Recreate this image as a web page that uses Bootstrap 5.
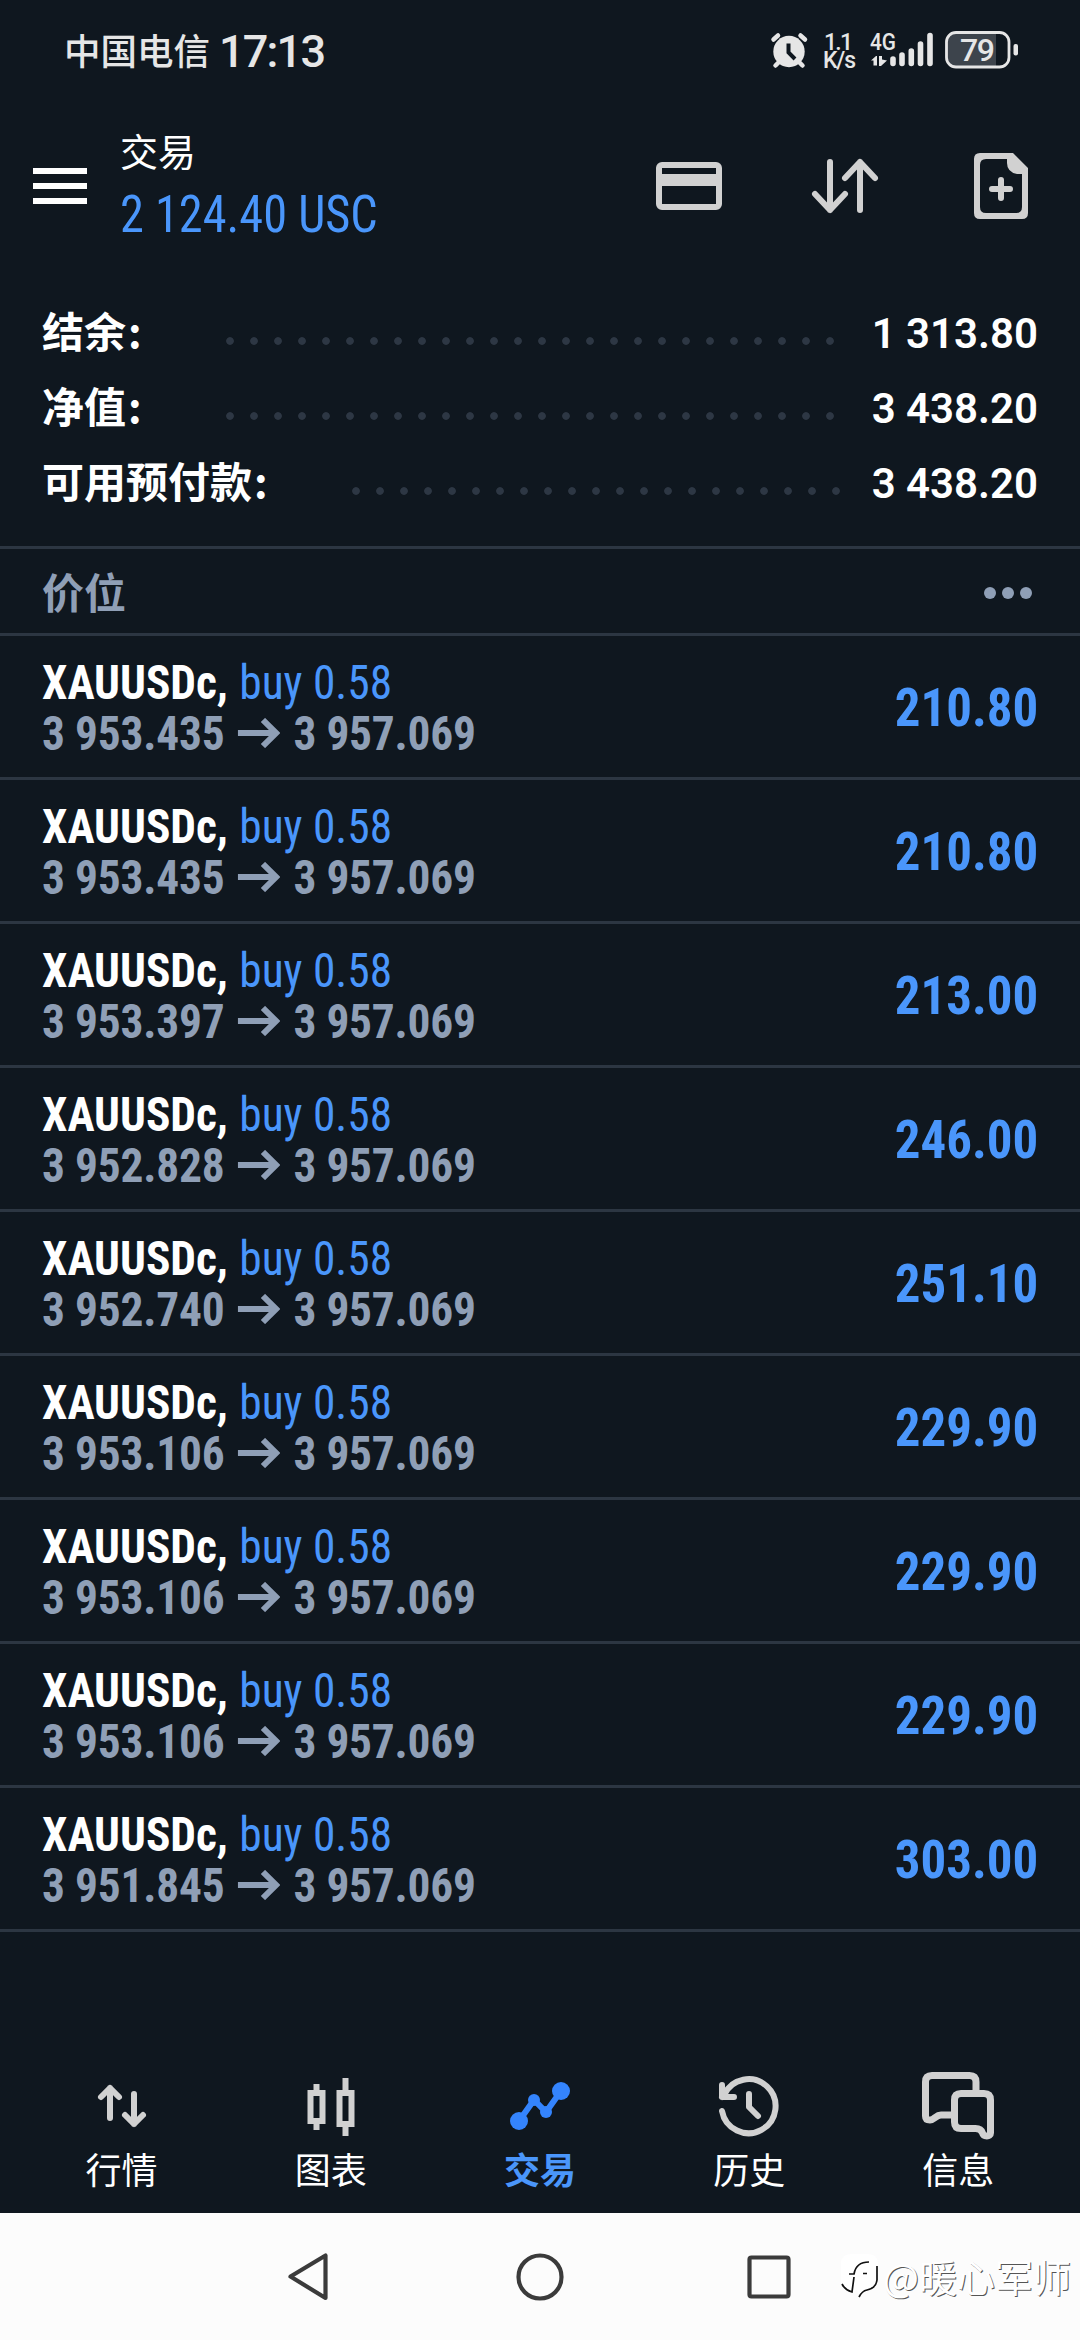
<!DOCTYPE html>
<html lang="zh-CN">
<head>
<meta charset="utf-8">
<meta name="viewport" content="width=device-width, initial-scale=1">
<title>交易</title>
<link href="https://cdn.jsdelivr.net/npm/bootstrap@5.3.0/dist/css/bootstrap.min.css" rel="stylesheet">
<style>
  body { width: 1080px; height: 2340px; overflow: hidden; background: #0f171f; color: #fff; font-family: "Noto Sans CJK SC", sans-serif; }
  svg { display: block; flex: none; }
  .status { height: 103px; padding: 0 60px 0 64px; color: #e6e6e6; }
  .carrier { font-size: 36.5px; line-height: 100px; font-weight: 500; margin-top: -3px; }
  .clock { font: 500 45px/106px Roboto, sans-serif; letter-spacing: -1.8px; margin-left: 9px; }
  .topbar { height: 165px; padding: 0 51px 0 33px; }
  .menu-ico { margin-top: 65px; }
  .tools { margin-top: 47px; }
  .titles { margin-left: 33px; }
  .ttl { font-size: 38px; line-height: 48px; margin-top: 23px; }
  .total { font: 400 51px/62px "Roboto Condensed", sans-serif; color: #4a96fb; margin-top: 10px; white-space: pre; transform: scaleX(.948); transform-origin: 0 50%; }
  .account { padding: 27px 42px 0; height: 278px; }
  .acc-row { height: 75px; font-weight: 700; font-size: 42px; line-height: 75px; }
  .lbl { height: 75px; margin-top: -6px; flex: none; white-space: nowrap; }
  .lbl i { font-style: normal; margin: 0 -2px 0 2px; }
  .acc-row .num { font-family: Roboto, sans-serif; font-weight: 600; font-size: 42px; padding-top: 2px; }
  .leader { height: 8px; margin: 16px 28px 0 86px; background: radial-gradient(circle at 4px 4px, #2d3744 3.4px, transparent 4.2px) 0 0 / 24px 8px repeat-x; }
  .sect { height: 90px; padding: 0 48px 0 42px; border-top: 3px solid #2c3642; border-bottom: 3px solid #2c3642; color: #8f9fb6; font-weight: 700; font-size: 42px; line-height: 84px; }
  .sect svg { margin-top: 3px; }
  .deal { height: 144px; padding: 2px 42px 0; border-bottom: 3px solid #2c3642; font-family: "Roboto Condensed", sans-serif; font-size: 48px; }
  .line-a, .line-b { height: 51px; line-height: 51px; transform: scaleX(.945); transform-origin: 0 50%; }
  .sym { font-weight: 700; }
  .side { color: #4a96fb; margin-left: 12px; }
  .line-b { color: #8f9fb6; font-weight: 700; letter-spacing: -.2px; }
  .arw { margin: 0 14px; }
  .profit { font-size: 54px; font-weight: 700; color: #4a96fb; line-height: 60px; transform: scaleX(.943); transform-origin: 100% 50%; }
  .tabs { height: 200px; padding: 0 17px; }
  .tab-item { width: 20%; font-size: 36px; line-height: 48px; }
  .tab-item svg { margin-top: 57px; margin-bottom: 2px; }
  .tab-item.on { color: #4a96fb; font-weight: 700; }
  .sysnav { height: 127px; background: #fcfcfc; }
  .keys { margin-top: 34px; }
  .wm { right: 9px; top: 36px; gap: 4px; }
  .wm-text { font-size: 38px; line-height: 54px; color: #fff; text-shadow: 1px 1px 0 #555; }
</style>
</head>
<body class="d-flex flex-column">

<svg width="0" height="0" class="position-absolute"><symbol id="arrow" viewBox="0 0 42 30" preserveAspectRatio="none"><path d="M0 15h37M25 2l13 13-13 13" fill="none" stroke="#8f9fb6" stroke-width="6"/></symbol></svg>

<header class="status d-flex justify-content-between align-items-center">
  <div class="d-flex align-items-center"><span class="carrier">中国电信</span><span class="clock">17:13</span></div>
  <svg width="252" height="45" viewBox="768 30 252 45" font-family="Roboto, sans-serif" fill="#e6e6e6">
    <g stroke="#e6e6e6" stroke-width="4.5" stroke-linecap="round">
      <path d="M773.500 40.500l4.500-4M805 40.500l-4.500-4M779 63l-3.500 3.500M799 63l3.500 3.500"/>
    </g>
    <circle cx="789" cy="52.500" r="15.700"/>
    <path d="M788.500 44.500v9l6.500 6.500" fill="none" stroke="#0f171f" stroke-width="4"/>
    <text x="824" y="50.500" font-size="23" font-weight="500" textLength="29">1.1</text>
    <text x="823" y="69" font-size="23" font-weight="500" textLength="33">K/s</text>
    <text x="870" y="50.500" font-size="23" font-weight="500" textLength="26" lengthAdjust="spacingAndGlyphs">4G</text>
    <path d="M871 61.500l5-4.500h1v9.500h-3.500v-5zM879 57h3v3.500l5 1-6 5.500h-2z"/>
    <g stroke="#e6e6e6" stroke-width="5.600" stroke-linecap="round">
      <path d="M893 60v4.500M902 56v8.500M911.300 52v12.500M920.500 45v19.500M930 36.500v28"/>
    </g>
    <path d="M956 34h40v33h-40q-9.500 0-9.500-9.500v-14q0-9.500 9.500-9.500z" fill="#3d444c"/>
    <rect x="946.500" y="33.500" width="62.500" height="34.500" rx="9.500" fill="none" stroke="#e6e6e6" stroke-width="2.800"/>
    <rect x="1013.500" y="45" width="4.500" height="11.500" rx="2"/>
    <text x="960" y="62" font-size="32" font-weight="500" textLength="35">79</text>
  </svg>
</header>

<div class="topbar d-flex">
  <svg class="menu-ico" width="54" height="36" viewBox="0 0 54 36" fill="#fff"><path d="M0 0h54v6H0zM0 15h54v6H0zM0 30h54v6H0z"/></svg>
  <div class="titles flex-grow-1">
    <div class="ttl">交易</div>
    <div class="total">2 124.40 USC</div>
  </div>
  <svg class="tools" width="374" height="72" viewBox="656 150 374 72" fill="#d1d1d1" stroke="#d1d1d1">
    <rect x="660" y="165" width="60" height="42" rx="3" fill="none" stroke-width="6"/>
    <path d="M660 174h60v12h-60z" stroke="none"/>
    <path d="M831 162v48M816 194l15 16 15-16M861 210v-48M846 178l15-16 15 16" fill="none" stroke-width="6" stroke-linecap="round" stroke-linejoin="round"/>
    <path fill-rule="evenodd" stroke="none" d="M981 153h33l15 15v45q0 6-6 6h-42q-6 0-6-6v-54q0-6 6-6zM987 159q-6 0-6 6v42q0 6 6 6h30q6 0 6-6v-33h-5q-10-2-10-11v-4z"/>
    <path d="M1002 180v18M993 189h18" stroke-width="6" stroke-linecap="round"/>
  </svg>
</div>

<section class="account">
  <div class="acc-row d-flex align-items-center"><span class="lbl">结余<i>:</i></span><span class="leader flex-grow-1"></span><span class="num">1 313.80</span></div>
  <div class="acc-row d-flex align-items-center"><span class="lbl">净值<i>:</i></span><span class="leader flex-grow-1"></span><span class="num">3 438.20</span></div>
  <div class="acc-row d-flex align-items-center"><span class="lbl">可用预付款<i>:</i></span><span class="leader flex-grow-1"></span><span class="num">3 438.20</span></div>
</section>

<div class="sect d-flex justify-content-between align-items-center">
  <span>价位</span>
  <svg width="48" height="12" viewBox="0 0 48 12" fill="#8f9fb6"><circle cx="6" cy="6" r="6"/><circle cx="24" cy="6" r="6"/><circle cx="42" cy="6" r="6"/></svg>
</div>

<main>
  <div class="deal d-flex justify-content-between align-items-center">
    <div><div class="line-a d-flex"><span class="sym">XAUUSDc,</span><span class="side">buy 0.58</span></div>
    <div class="line-b d-flex align-items-center"><span>3 953.435</span><svg class="arw" width="45" height="30"><use href="#arrow"/></svg><span>3 957.069</span></div></div>
    <div class="profit">210.80</div>
  </div>
  <div class="deal d-flex justify-content-between align-items-center">
    <div><div class="line-a d-flex"><span class="sym">XAUUSDc,</span><span class="side">buy 0.58</span></div>
    <div class="line-b d-flex align-items-center"><span>3 953.435</span><svg class="arw" width="45" height="30"><use href="#arrow"/></svg><span>3 957.069</span></div></div>
    <div class="profit">210.80</div>
  </div>
  <div class="deal d-flex justify-content-between align-items-center">
    <div><div class="line-a d-flex"><span class="sym">XAUUSDc,</span><span class="side">buy 0.58</span></div>
    <div class="line-b d-flex align-items-center"><span>3 953.397</span><svg class="arw" width="45" height="30"><use href="#arrow"/></svg><span>3 957.069</span></div></div>
    <div class="profit">213.00</div>
  </div>
  <div class="deal d-flex justify-content-between align-items-center">
    <div><div class="line-a d-flex"><span class="sym">XAUUSDc,</span><span class="side">buy 0.58</span></div>
    <div class="line-b d-flex align-items-center"><span>3 952.828</span><svg class="arw" width="45" height="30"><use href="#arrow"/></svg><span>3 957.069</span></div></div>
    <div class="profit">246.00</div>
  </div>
  <div class="deal d-flex justify-content-between align-items-center">
    <div><div class="line-a d-flex"><span class="sym">XAUUSDc,</span><span class="side">buy 0.58</span></div>
    <div class="line-b d-flex align-items-center"><span>3 952.740</span><svg class="arw" width="45" height="30"><use href="#arrow"/></svg><span>3 957.069</span></div></div>
    <div class="profit">251.10</div>
  </div>
  <div class="deal d-flex justify-content-between align-items-center">
    <div><div class="line-a d-flex"><span class="sym">XAUUSDc,</span><span class="side">buy 0.58</span></div>
    <div class="line-b d-flex align-items-center"><span>3 953.106</span><svg class="arw" width="45" height="30"><use href="#arrow"/></svg><span>3 957.069</span></div></div>
    <div class="profit">229.90</div>
  </div>
  <div class="deal d-flex justify-content-between align-items-center">
    <div><div class="line-a d-flex"><span class="sym">XAUUSDc,</span><span class="side">buy 0.58</span></div>
    <div class="line-b d-flex align-items-center"><span>3 953.106</span><svg class="arw" width="45" height="30"><use href="#arrow"/></svg><span>3 957.069</span></div></div>
    <div class="profit">229.90</div>
  </div>
  <div class="deal d-flex justify-content-between align-items-center">
    <div><div class="line-a d-flex"><span class="sym">XAUUSDc,</span><span class="side">buy 0.58</span></div>
    <div class="line-b d-flex align-items-center"><span>3 953.106</span><svg class="arw" width="45" height="30"><use href="#arrow"/></svg><span>3 957.069</span></div></div>
    <div class="profit">229.90</div>
  </div>
  <div class="deal d-flex justify-content-between align-items-center">
    <div><div class="line-a d-flex"><span class="sym">XAUUSDc,</span><span class="side">buy 0.58</span></div>
    <div class="line-b d-flex align-items-center"><span>3 951.845</span><svg class="arw" width="45" height="30"><use href="#arrow"/></svg><span>3 957.069</span></div></div>
    <div class="profit">303.00</div>
  </div>
</main>

<nav class="tabs d-flex mt-auto">
  <div class="tab-item d-flex flex-column align-items-center"><svg width="72" height="72" viewBox="86 2070 72 72" fill="none" stroke="#d1d1d1" stroke-width="6" stroke-linecap="round" stroke-linejoin="round"><path d="M110 2118v-30M101 2097l9-9 9 9M134 2094v30M125 2115l9 9 9-9"/></svg>行情</div>
  <div class="tab-item d-flex flex-column align-items-center"><svg width="72" height="72" viewBox="295 2070 72 72" fill="none" stroke="#d1d1d1" stroke-width="6"><path d="M310.500 2093h12v28h-12zM339.500 2093h12v31h-12zM316.500 2084v8M316.500 2122v8M345.500 2078v14M345.500 2124v12"/></svg>图表</div>
  <div class="tab-item on d-flex flex-column align-items-center"><svg width="72" height="72" viewBox="504 2070 72 72" fill="#3484fd"><path d="M519 2121l15-21 12 12 15-21" fill="none" stroke="#3484fd" stroke-width="6"/><circle cx="519" cy="2121" r="9"/><circle cx="534" cy="2100" r="6"/><circle cx="546" cy="2112" r="6"/><circle cx="561" cy="2091" r="9"/></svg>交易</div>
  <div class="tab-item d-flex flex-column align-items-center"><svg width="72" height="72" viewBox="713 2070 72 72" fill="none" stroke="#d1d1d1" stroke-width="6" stroke-linecap="round" stroke-linejoin="round"><path d="M722 2111a27 27 0 1 0 2-16M722 2085v12h12M749 2094v13l9 9M722 2097l5-7"/></svg>历史</div>
  <div class="tab-item d-flex flex-column align-items-center"><svg width="76" height="72" viewBox="920 2070 76 72" fill="none" stroke="#d1d1d1" stroke-width="7" stroke-linejoin="round"><path d="M976 2090v-8q0-6.500-6.500-6.500h-37.500q-6.500 0-6.500 6.500v34q0 4 4.500 4c4 0 6-5 11-5h11"/><path d="M961 2093.500h23q6.500 0 6.500 6.500v33c0 4-7 4-8 0-1-3-3-4.500-7-4.500h-14.500q-6.500 0-6.500-6.500v-22q0-6.500 6.500-6.500z"/></svg>信息</div>
</nav>

<footer class="sysnav position-relative d-flex justify-content-center">
  <svg class="keys" width="520" height="60" viewBox="280 2247 520 60" fill="none" stroke="#3b3b3b" stroke-width="4.200" stroke-linejoin="round">
    <path d="M290.500 2276.500L325.500 2255.500V2298z"/>
    <circle cx="540" cy="2277" r="21.500"/>
    <rect x="749.500" y="2257.500" width="39" height="39" rx="2"/>
  </svg>
  <div class="wm position-absolute d-flex align-items-center">
    <svg width="38" height="46" viewBox="0 0 38 46"><path d="M10 1h17q10 0 10 10v16q0 9-9 10l-9 6-3-6-5 2Q0 35 0 26V11Q0 1 10 1z" fill="#fff"/><path d="M8 21h5Q15 9 28 9M22 20.500h4M1 31q3 6 10 8l2-15M18 44q3-6 8-7 9-2 10-10V13" fill="none" stroke="#111" stroke-width="1.700"/></svg>
    <span class="wm-text">@暖心军师</span>
  </div>
</footer>
<script src="https://cdn.jsdelivr.net/npm/bootstrap@5.3.0/dist/js/bootstrap.bundle.min.js"></script>
</body>
</html>
